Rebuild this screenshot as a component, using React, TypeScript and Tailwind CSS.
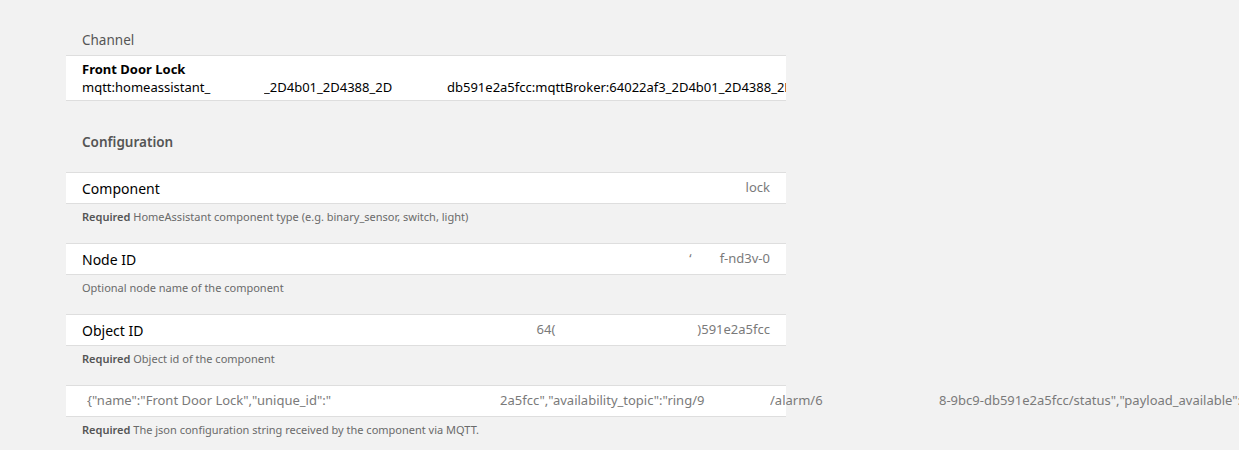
import React from "react";

const font = { fontFamily: '"Noto Sans", "Open Sans", sans-serif' };

function Row({ label, value }: { label: string; value: React.ReactNode }) {
  return (
    <div className="h-[32px] border-y border-[#dedede] bg-white flex items-center justify-between px-4">
      <span className="text-[14px] text-black">{label}</span>
      <span className="text-[13px] text-[#7a7a7a] whitespace-nowrap flex items-center">{value}</span>
    </div>
  );
}

function Desc({ required, text }: { required?: boolean; text: string }) {
  return (
    <div className="h-[39px] pt-[5px] px-4 text-[11px] leading-[16px] text-[#6a6a6a]">
      {required && <span className="font-semibold text-[#555]">Required </span>}
      {text}
    </div>
  );
}

export default function App() {
  return (
    <div className="w-full h-[450px] bg-[#f2f2f2] overflow-hidden" style={font}>
      <div className="ml-[66px] w-[720px] pt-[30px]">
        <div className="px-4 h-[20px] leading-[20px] text-[13.5px] text-[#555] mb-[5px]">Channel</div>
        <div className="border-y border-[#dedede] bg-white px-4 py-[4px] overflow-hidden">
          <div className="leading-[18px] text-[13px] font-bold text-black">Front Door Lock</div>
          <div className="leading-[18px] text-[13px] text-black whitespace-nowrap flex">
            <span className="inline-block w-[182px] overflow-hidden shrink-0">mqtt:homeassistant_</span>
            <span className="inline-block w-[183px] overflow-hidden shrink-0">_2D4b01_2D4388_2D</span>
            <span className="shrink-0">db591e2a5fcc:mqttBroker:64022af3_2D4b01_2D4388_2D9bc9</span>
          </div>
        </div>

        <div className="mt-[31px] mb-[20px] px-4 h-[20px] leading-[20px] text-[13.5px] font-semibold text-[#555]">Configuration</div>

        <Row label="Component" value="lock" />
        <Desc required text="HomeAssistant component type (e.g. binary_sensor, switch, light)" />

        <Row
          label="Node ID"
          value={
            <>
              <span>‘</span>
              <span className="inline-block w-[28px]"></span>
              <span>f-nd3v-0</span>
            </>
          }
        />
        <Desc text="Optional node name of the component" />

        <Row
          label="Object ID"
          value={
            <>
              <span>64(</span>
              <span className="inline-block w-[142px]"></span>
              <span>)591e2a5fcc</span>
            </>
          }
        />
        <Desc required text="Object id of the component" />

        <div className="h-[32px] border-y border-[#dedede] bg-white flex items-center pl-[21px]">
          <div className="text-[13px] text-[#7a7a7a] whitespace-nowrap flex">
            <span className="inline-block w-[413px] overflow-hidden shrink-0">{'{"name":"Front Door Lock","unique_id":"'}</span>
            <span className="inline-block w-[270px] overflow-hidden shrink-0">{'2a5fcc","availability_topic":"ring/9'}</span>
            <span className="inline-block w-[169px] overflow-hidden shrink-0">{'/alarm/6'}</span>
            <span className="shrink-0">{'8-9bc9-db591e2a5fcc/status","payload_available":"online","payload_not_available":"offline"}'}</span>
          </div>
        </div>
        <Desc required text="The json configuration string received by the component via MQTT." />
      </div>
    </div>
  );
}
